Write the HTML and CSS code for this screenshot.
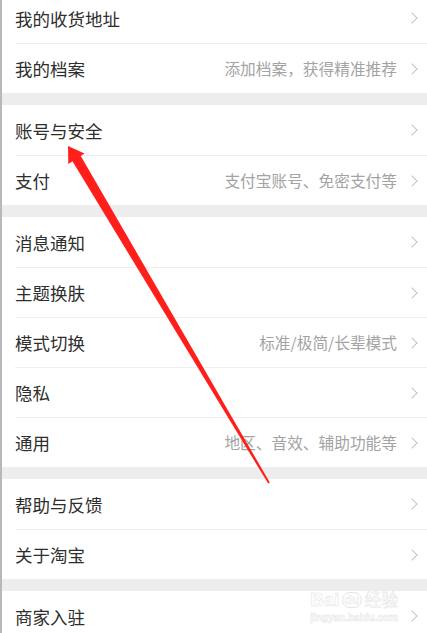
FILE: index.html
```html
<!DOCTYPE html>
<html lang="zh-CN">
<head>
  <meta charset="UTF-8">
  <meta name="viewport" content="width=device-width, initial-scale=1.0">
  <title>设置</title>
  <link rel="stylesheet" href="styles.css">
</head>
<body>

  <div class="page">
    <div class="group first">
      <div class="row"><span class="label">我的收货地址</span><span class="arrow"></span></div>
      <div class="row"><span class="label">我的档案</span><span class="hint">添加档案，获得精准推荐</span><span class="arrow"></span></div>
    </div>

    <div class="group">
      <div class="row"><span class="label">账号与安全</span><span class="arrow"></span></div>
      <div class="row"><span class="label">支付</span><span class="hint">支付宝账号、免密支付等</span><span class="arrow"></span></div>
    </div>

    <div class="group">
      <div class="row"><span class="label">消息通知</span><span class="arrow"></span></div>
      <div class="row"><span class="label">主题换肤</span><span class="arrow"></span></div>
      <div class="row"><span class="label">模式切换</span><span class="hint">标准/极简/长辈模式</span><span class="arrow"></span></div>
      <div class="row"><span class="label">隐私</span><span class="arrow"></span></div>
      <div class="row"><span class="label">通用</span><span class="hint">地区、音效、辅助功能等</span><span class="arrow"></span></div>
    </div>

    <div class="group">
      <div class="row"><span class="label">帮助与反馈</span><span class="arrow"></span></div>
      <div class="row"><span class="label">关于淘宝</span><span class="arrow"></span></div>
    </div>

    <div class="group">
      <div class="row"><span class="label">商家入驻</span><span class="arrow"></span></div>
    </div>
  </div>

  <!-- red arrow drawn over the screenshot -->
  <svg class="pointer" width="427" height="633" viewBox="0 0 427 633">
    <polygon points="68,146 68.3,164 84.5,153.5" fill="#ff1f1a"/>
    <polygon points="80.5,155.5 72,160.5 268.2,483.6 269.8,482.6" fill="#ff1f1a"/>
  </svg>

  <div class="watermark">
    <div class="wm-top">Bai<span class="paw">du</span><span class="wm-cn">经验</span></div>
    <div class="wm-url">jingyan.baidu.com</div>
  </div>

</body>
</html>
```

FILE: styles.css
```css
* {
  box-sizing: border-box;
}

body {
  margin: 0;
  height: 633px;
  overflow: hidden;
  background-color: #ededed;
  font-family: "Noto Sans CJK SC", "Noto Sans", sans-serif;
  position: relative;
}

.page {
  border-left: 2px solid #b8b8b8;
  height: 100%;
  display: flex;
  flex-direction: column;
  gap: 12px;
}

.group {
  background-color: #ffffff;
  padding-left: 13px;
}

.group.first {
  margin-top: -7px;
}

.row {
  height: 50px;
  display: flex;
  align-items: center;
  padding-right: 9px;
  border-top: 1px solid #efefef;
}

.row:first-child {
  border-top: none;
}

.label {
  font-size: 17.5px;
  color: #2e2e2e;
  flex: 1;
}

.hint {
  font-size: 15.7px;
  color: #a3a3a3;
  margin-right: 11px;
}

.arrow {
  width: 8px;
  height: 8px;
  border-top: 1.3px solid #c4c4c4;
  border-right: 1.3px solid #c4c4c4;
  transform: rotate(45deg);
  margin-right: 2px;
}

.pointer {
  position: absolute;
  top: 0;
  left: 0;
}

.watermark {
  position: absolute;
  left: 310px;
  top: 588px;
  color: #ffffff;
  text-align: center;
  font-family: "Liberation Sans", sans-serif;
  -webkit-text-stroke: 0.5px #e2e2e2;
  opacity: 0.9;
}

.wm-top {
  font-size: 19px;
  font-weight: bold;
  line-height: 22px;
}

.wm-cn {
  font-family: "Noto Sans CJK SC", sans-serif;
  font-weight: normal;
  font-size: 17px;
}

.paw {
  display: inline-block;
  font-size: 12px;
  border: 1px solid #e2e2e2;
  border-radius: 8px;
  padding: 0 2px;
  margin: 0 2px;
  line-height: 14px;
  vertical-align: 2px;
}

.wm-url {
  font-size: 10px;
  line-height: 14px;
  font-weight: bold;
}
```
